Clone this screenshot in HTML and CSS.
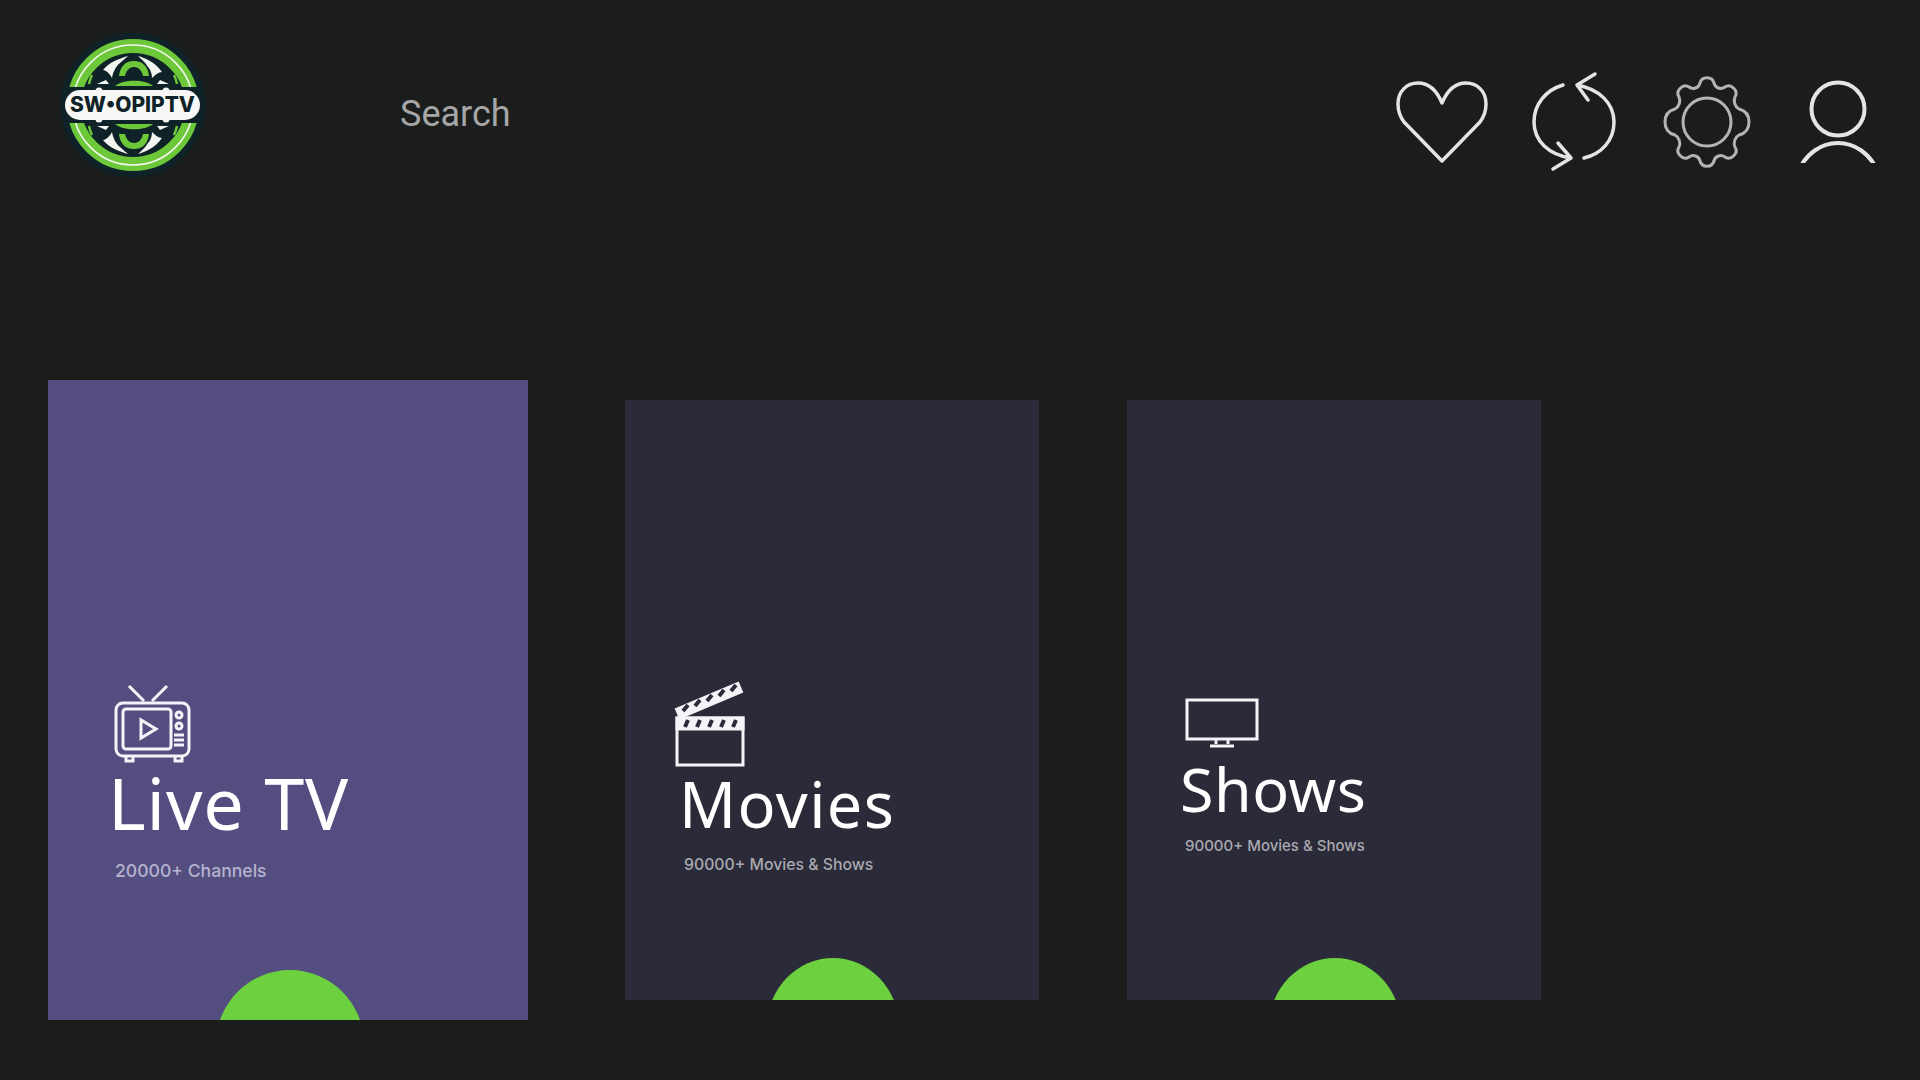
FILE: index.html
```html
<!DOCTYPE html>
<html lang="en">
<head>
<meta charset="utf-8">
<title>SwoopIPTV</title>
<link rel="stylesheet" href="styles.css">
</head>
<body>
<header class="topbar">
  <svg class="logo" viewBox="-75 -75 150 150" aria-label="SwoopIPTV logo">
    <defs>
      <clipPath id="upper"><rect x="-75" y="-75" width="150" height="57"/></clipPath>
      <g id="half" clip-path="url(#upper)">
        <circle r="59" fill="none" stroke="#6cc839" stroke-width="14"/>
        <circle r="60" fill="none" stroke="#f4f8f0" stroke-width="1.6"/>
        <path d="M-14 -29 C-13 -38 -8 -44 1 -44 C10 -44 15 -38 16 -29 H10 C9 -34 6 -38 1 -38 C-4 -38 -7 -34 -8 -29Z" fill="#6cc839"/>
        <path d="M-18 -19 C-10 -26 12 -26 20 -19Z" fill="#6cc839"/>
        <path d="M-5 -49 C-12 -47 -24 -43 -30 -35 C-27 -35 -23 -31 -21 -27 C-20 -33 -17 -39 -13 -42 C-10 -45 -7 -47 -5 -49Z" fill="#f2f5f0"/>
        <path d="M5 -49 C12 -47 22 -43 29 -33 C26 -33 22 -30 19 -27 C19 -32 17 -36 15 -38 C12 -43 8 -46 5 -49Z" fill="#f2f5f0"/>
        <path d="M-36 -21 L-27 -25 L-24 -21Z M36 -21 L27 -25 L24 -21Z" fill="#f2f5f0"/>
        <path d="M-41 -30 A34 34 0 0 0 -44 -21 M41 -30 A34 34 0 0 1 44 -21" fill="none" stroke="#6cc839" stroke-width="2.5"/>
      </g>
    </defs>
    <circle r="72.5" fill="#0e2227"/>
    <use href="#half"/>
    <use href="#half" transform="scale(1 -1)"/>
    <rect x="-68" y="-15" width="135" height="30" rx="15" fill="#f7f8f6"/>
    <circle cx="-34" cy="-14" r="3.5" fill="#f7f8f6"/>
    <circle cx="33" cy="-14" r="3.5" fill="#f7f8f6"/>
    <circle cx="-34" cy="14" r="3.5" fill="#f7f8f6"/>
    <circle cx="33" cy="14" r="3.5" fill="#f7f8f6"/>
    <text class="logo-text" x="-63" y="7" textLength="125" lengthAdjust="spacingAndGlyphs">SW•OPIPTV</text>
  </svg>
  <div class="search">Search</div>
  <nav class="actions">
    <svg class="action" viewBox="0 0 132 110"><path d="M65 91 L27 52 C21 44 21 38 21 34 C21 21 30 13 41 13 C52 13 60 21 65 33 C70 21 78 13 89 13 C100 13 109 21 109 34 C109 38 109 44 103 52Z"/></svg>
    <svg class="action" viewBox="0 0 132 110"><path d="M54 15 C37 20 25 34 25 52 C25 71 40 85 62 88 M49 73 L62 88 L44 99 M75 88 C92 84 105 71 105 52 C105 33 90 19 68 15 M86 4 L68 15 L79 30"/></svg>
    <svg class="action action-thin" viewBox="0 0 132 110"><circle cx="66" cy="52" r="24"/><path d="M59 13 C61 6 71 6 73 13 C74 18 80 20 84 17 C90 13 98 21 94 27 C92 31 94 37 98 39 C106 41 108 46 108 52 C108 58 106 63 98 65 C94 67 92 73 94 77 C98 83 90 91 84 87 C80 84 74 86 73 91 C71 98 61 98 59 91 C58 86 52 84 48 87 C42 91 34 83 38 77 C40 73 38 67 34 65 C26 63 24 58 24 52 C24 46 26 41 34 39 C38 37 40 31 38 27 C34 21 42 13 48 17 C52 20 58 18 59 13Z"/></svg>
    <svg class="action action-user" viewBox="0 0 132 110"><circle cx="65" cy="39" r="26.5"/><path d="M26 100 C33 84 48 73 65 73 C82 73 97 84 104 100"/></svg>
  </nav>
</header>
<main class="rows">
  <article class="card card-live">
    <svg class="icon icon-tv" viewBox="0 0 80 85">
      <path d="M16 3 L31 18 M54 3 L39 18"/>
      <rect x="3" y="20" width="73" height="53" rx="7"/>
      <rect x="10" y="26" width="48" height="40" rx="3"/>
      <path d="M28 37 V55 L43 46Z"/>
      <circle cx="66" cy="32" r="3"/><circle cx="66" cy="43" r="3"/>
      <path d="M61 52 H71 M61 57 H71 M61 62 H71 M13 73 V78 H20 V73 M62 73 V78 H69 V73"/>
    </svg>
    <h2 class="title title-live">Live TV</h2>
    <p class="sub sub-live">20000+ Channels</p>
    <span class="dot dot-live"></span>
  </article>
  <article class="card card-movies">
    <svg class="icon icon-clap" viewBox="0 0 80 92">
      <path class="clap-stick" d="M7 39 L71 12"/>
      <path class="clap-marks" d="M13 36 L18 30 M25 31 L30 25 M37 26 L42 20 M49 21 L54 15 M61 16 L66 10"/>
      <rect class="clap-band" x="7" y="43" width="66" height="11"/>
      <rect x="7" y="43" width="66" height="47"/>
      <path class="clap-marks" d="M18 45 L15 52 M30 45 L27 52 M42 45 L39 52 M54 45 L51 52 M66 45 L63 52"/>
    </svg>
    <h2 class="title title-movies">Movies</h2>
    <p class="sub sub-movies">90000+ Movies &amp; Shows</p>
    <span class="dot dot-small"></span>
  </article>
  <article class="card card-shows">
    <svg class="icon icon-screen" viewBox="0 0 76 52">
      <rect x="3" y="3" width="70" height="39"/>
      <path class="screen-stand" d="M32 43 V47 M44 43 V47 M26 49 H50"/>
    </svg>
    <h2 class="title title-shows">Shows</h2>
    <p class="sub sub-shows">90000+ Movies &amp; Shows</p>
    <span class="dot dot-small"></span>
  </article>
</main>
</body>
</html>
```
FILE: styles.css
```css
html, body {
  margin: 0;
  width: 1920px;
  height: 1080px;
  overflow: hidden;
  background: #1b1d1c;
}

.topbar {
  display: flex;
  align-items: flex-start;
  height: 190px;
  padding: 30px 15px 0 58px;
  box-sizing: border-box;
}

.logo {
  width: 150px;
  height: 150px;
  flex: none;
}

.logo-text {
  font-family: Inter, "Liberation Sans", sans-serif;
  font-size: 21px;
  font-weight: 800;
  fill: #0e2227;
}

.search {
  margin: 62px 0 0 192px;
  font-family: Roboto, sans-serif;
  font-size: 36px;
  line-height: 44px;
  color: #a6a6a6;
}

.actions {
  display: flex;
  margin: 40px 0 0 auto;
}

.action {
  width: 132px;
  height: 110px;
  fill: none;
  stroke: #e4e4e4;
  stroke-width: 3.5;
  stroke-linecap: round;
  stroke-linejoin: round;
}

.action-thin {
  stroke: #b4b4b4;
  stroke-width: 3;
}

.action-user {
  stroke-width: 4;
  clip-path: inset(0 0 17px 0);
}

.rows {
  display: flex;
  align-items: center;
  height: 640px;
  margin-top: 190px;
  padding-left: 48px;
  gap: 88px;
}

.card {
  position: relative;
  flex: none;
  display: flex;
  flex-direction: column;
  align-items: flex-start;
  box-sizing: border-box;
  width: 414px;
  height: 600px;
  overflow: hidden;
  background: #2a2a38;
  color: #fff;
}

.card-live {
  width: 480px;
  height: 640px;
  margin-right: 9px;
  padding: 303px 0 0 65px;
  background: #544e80;
}

.card-movies {
  padding: 275px 0 0 45px;
}

.card-shows {
  padding: 297px 0 0 57px;
}

.icon {
  display: block;
  flex: none;
  fill: none;
  stroke: #f4f4f8;
  stroke-width: 3;
}

.icon-tv {
  width: 80px;
  height: 85px;
}

.icon-clap {
  width: 80px;
  height: 92px;
}

.clap-stick {
  stroke-width: 12;
}

.clap-band {
  fill: #f4f4f8;
}

.clap-marks {
  stroke: #2a2a38;
  stroke-width: 4;
}

.icon-screen {
  width: 76px;
  height: 52px;
}

.screen-stand {
  stroke-width: 3;
}

.title {
  margin: 0;
  font-family: "Noto Sans", sans-serif;
  font-weight: 400;
  white-space: nowrap;
}

.title-live {
  margin: -2px 0 0 -5px;
  font-size: 72px;
  line-height: 72px;
  letter-spacing: 0.8px;
}

.title-movies {
  margin: 5px 0 0 9px;
  font-size: 63px;
  line-height: 63px;
  letter-spacing: 1.4px;
}

.title-shows {
  margin: 9px 0 0 -4px;
  font-size: 61px;
  line-height: 61px;
  letter-spacing: 0.5px;
}

.sub {
  margin: 0;
  font-family: Inter, sans-serif;
  font-weight: 500;
  white-space: nowrap;
}

.sub-live {
  margin: 23px 0 0 2px;
  font-size: 17.6px;
  line-height: 20px;
  color: #b5b2cf;
}

.sub-movies {
  margin: 20px 0 0 14px;
  font-size: 15.8px;
  line-height: 20px;
  color: #a9a9b0;
}

.sub-shows {
  margin: 17px 0 0 1px;
  font-size: 15px;
  line-height: 20px;
  color: #a9a9b0;
}

.dot {
  position: absolute;
  border-radius: 50%;
  background: #6cd03f;
}

.dot-live {
  left: 168px;
  bottom: -98px;
  width: 148px;
  height: 148px;
}

.dot-small {
  left: 142px;
  bottom: -96px;
  width: 132px;
  height: 138px;
}
```
